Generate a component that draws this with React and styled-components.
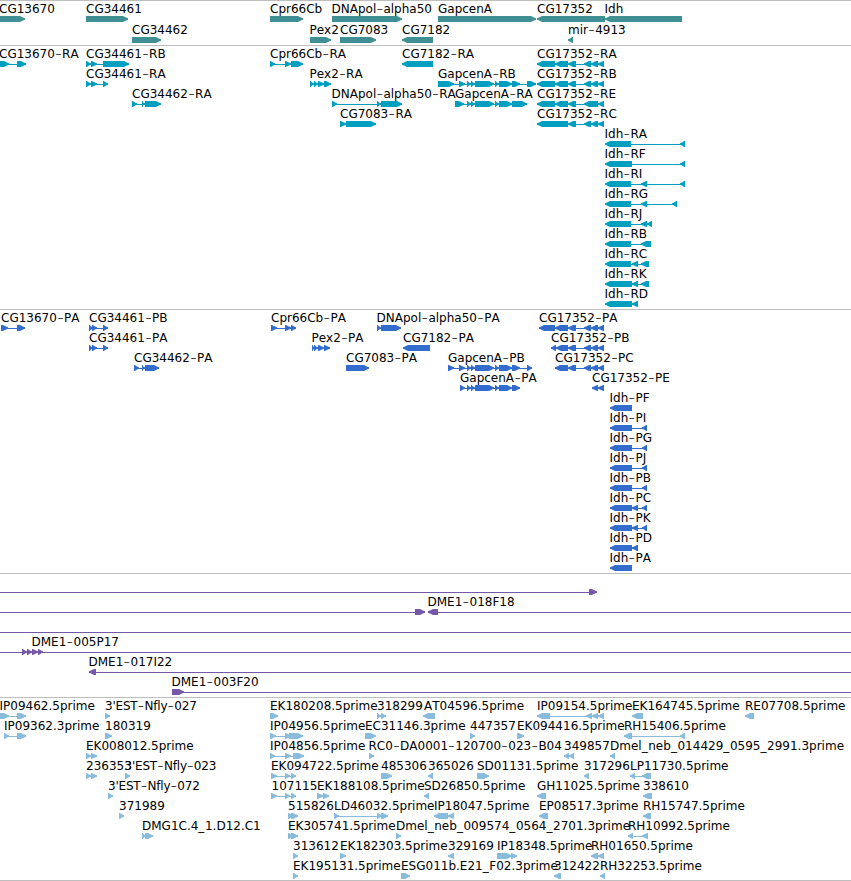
import React from 'react';
import styled, { createGlobalStyle } from 'styled-components';

const PageStyle = createGlobalStyle`
  body {
    margin: 0;
    background: #ffffff;
    overflow: hidden;
  }
`;

const Browser = styled.main`
  display: flex;
  flex-direction: column;
  width: 851px;
  height: 881px;
  border-bottom: 1px solid #bebebe;
  box-sizing: border-box;
  background: #ffffff;
`;

const Track = styled.section`
  display: flex;
  flex-direction: column;
  border-top: 1px solid #bebebe;
  padding-bottom: ${(p) => p.$gap}px;
  color: ${(p) => p.$color};
`;

const Lane = styled.svg`
  display: block;
  width: 851px;
  height: ${(p) => p.$height}px;
  overflow: visible;
`;

const Exon = styled.path`
  fill: currentColor;
`;

const Intron = styled.rect`
  fill: currentColor;
  height: 1px;
`;

const Label = styled.text`
  fill: #000000;
  font-family: 'DejaVu Sans', sans-serif;
  font-size: 12px;
  font-weight: 400;
  font-kerning: none;
  font-variant-ligatures: none;
  letter-spacing: ${(p) => (p.$tight ? '-0.2px' : 'normal')};
`;

const Dash = styled.tspan`
  font-size: 18px;
  font-weight: 200;
`;

const Underscore = styled.tspan`
  letter-spacing: 0.6px;
`;

// A feature: [label, strand, label x, exon ranges, optional line range]
const R = 1;
const L = -1;

const cg17352 = '568-576 584-591 591-598 598-604';
const gapMiddle = '467-471 471-475 475-494 495-499 499-512';

const tracks = [
  {
    color: '#408f95', rowHeight: 21, gap: 2,
    rows: [
      [
        ['CG13670', R, -1, '0-25'], ['CG34461', R, 86, '86-128'], ['Cpr66Cb', R, 270, '270-303'],
        ['DNApol-alpha50', R, 331.5, '332-402'], ['GapcenA', R, 438, '438-536'],
        ['CG17352', L, 537, '537-605'], ['Idh', L, 604.5, '605-682'],
      ],
      [
        ['CG34462', R, 132, '132-161'], ['Pex2', R, 309.5, '310-331'], ['CG7083', R, 340, '340-376'],
        ['CG7182', L, 402, '402-433'], ['mir-4913', L, 568, '568-573'],
      ],
    ],
  },
  {
    color: '#009fbf', rowHeight: 20, gap: 3,
    rows: [
      [
        ['CG13670-RA', R, -1, '0-9 17-26'], ['CG34461-RB', R, 86, '86-91 91-97 103-129'],
        ['Cpr66Cb-RA', R, 270, '270-275 285-291 291-303'], ['CG7182-RA', L, 402, '402-433'],
        ['CG17352-RA', L, 537, `537-555 555-568 ${cg17352}`],
      ],
      [
        ['CG34461-RA', R, 86, '86-91 91-97 103-108'], ['Pex2-RA', R, 309.5, '310-314 314-318 318-324 324-331'],
        ['GapcenA-RB', R, 438, `438-454 459-465 ${gapMiddle} 512-520 527-536`],
        ['CG17352-RB', L, 537, `537-555 555-568 ${cg17352}`],
      ],
      [
        ['CG34462-RA', R, 132, '132-137 142-145 145-161'], ['DNApol-alpha50-RA', R, 331.5, '332-337 377-381 381-402'],
        ['GapcenA-RA', R, 455, `455-464 ${gapMiddle} 512-527`],
        ['CG17352-RE', L, 537, '537-555 555-568 568-576 584-598 598-604'],
      ],
      [['CG7083-RA', R, 340, '340-346 346-376'], ['CG17352-RC', L, 537, `537-568 ${cg17352}`]],
      [['Idh-RA', L, 604.5, '605-631 680-685']],
      [['Idh-RF', L, 604.5, '605-632 680-685']],
      [['Idh-RI', L, 604.5, '605-631 641-647 680-685']],
      [['Idh-RG', L, 604.5, '605-631 641-647 672-677']],
      [['Idh-RJ', L, 604.5, '605-631 641-647 647-652']],
      [['Idh-RB', L, 604.5, '605-631 641-651']],
      [['Idh-RC', L, 604.5, '605-631 632-638 641-649']],
      [['Idh-RK', L, 604.5, '605-632 632-638 641-649']],
      [['Idh-RD', L, 604.5, '605-632 632-638']],
    ],
  },
  {
    color: '#326ccc', rowHeight: 20, gap: 3,
    rows: [
      [
        ['CG13670-PA', R, 1, '1-8 17-25'], ['CG34461-PB', R, 89, '89-93 92-97 103-108'],
        ['Cpr66Cb-PA', R, 271, '271-277 285-291 291-296'], ['DNApol-alpha50-PA', R, 376.5, '377-381 381-401'],
        ['CG17352-PA', L, 539, `539-555 555-568 ${cg17352}`],
      ],
      [
        ['CG34461-PA', R, 89, '89-93 92-97 103-108'], ['Pex2-PA', R, 311.5, '312-315 314-318 318-324 324-330'],
        ['CG7182-PA', L, 403, '403-430'], ['CG17352-PB', L, 551, `551-556 556-568 ${cg17352}`],
      ],
      [
        ['CG34462-PA', R, 134, '134-139 142-145 145-159'], ['CG7083-PA', R, 346, '346-369'],
        ['GapcenA-PB', R, 448, `448-454 459-465 ${gapMiddle} 512-520 527-532`],
        ['CG17352-PC', L, 555, `555-568 ${cg17352}`],
      ],
      [['GapcenA-PA', R, 460, `460-465 ${gapMiddle} 512-520`], ['CG17352-PE', L, 592, '592-598 598-604']],
      [['Idh-PF', L, 609.5, '610-632']],
      [['Idh-PI', L, 609.5, '610-632 642-647']],
      [['Idh-PG', L, 609.5, '610-632 642-647']],
      [['Idh-PJ', L, 609.5, '610-632 642-647']],
      [['Idh-PB', L, 609.5, '610-632 642-647']],
      [['Idh-PC', L, 609.5, '610-632 632-638 642-647']],
      [['Idh-PK', L, 609.5, '610-632 632-638 642-647']],
      [['Idh-PD', L, 609.5, '610-632 632-638']],
      [['Idh-PA', L, 609.5, '610-632']],
    ],
  },
  {
    color: '#7558a8', rowHeight: 20, gap: 3,
    rows: [
      [['', R, 0, '589-597', [0, 597]]],
      [['', R, 0, '415-425', [0, 425]], ['DME1-018F18', L, 427.5, '428-438', [428, 851]]],
      [['', R, 0, '', [0, 851]]],
      [['DME1-005P17', R, 31.5, '22-27 27-32 32-38 38-43', [0, 851]]],
      [['DME1-017I22', L, 88.5, '89-96', [89, 851]]],
      [['DME1-003F20', R, 171.5, '172-184', [172, 851]]],
    ],
  },
  {
    color: '#88bbdc', rowHeight: 20, gap: 2,
    rows: [
      [
        ['IP09462.5prime', R, -0.5, '0-9 17-26'], ["3'EST-Nfly-027", R, 105, '105-110'],
        ['EK180208.5prime', R, 270, '270-278'], ['318299', R, 377, '377-381 381-386'],
        ['AT04596.5prime', L, 424, '423-435'], ['IP09154.5prime', L, 537, '537-550 586-592 592-598 598-604'],
        ['EK164745.5prime', L, 632, '632-643'], ['RE07708.5prime', L, 745, '745-754'],
      ],
      [
        ['IP09362.3prime', R, 4, '4-9 17-26'], ['180319', R, 105, '105-112'],
        ['IP04956.5prime', R, 270, '270-276 285-291 289-303'], ['EC31146.3prime', R, 365, '365-376'],
        ['447357', R, 470, '470-475'], ['EK094416.5prime', R, 517, '517-524'],
        ['RH15406.5prime', L, 624, '624-632 680-685'],
      ],
      [
        ['EK008012.5prime', R, 86, '86-91 91-97'], ['IP04856.5prime', R, 270, '270-275 285-291 293-304'],
        ['RC0-DA0001-120700-023-B04', R, 368.5, '369-374'], ['349857', L, 564, '564-569 569-574'],
        ['Dmel_neb_014429_0595_2991.3prime', L, 610, '610-615'],
      ],
      [
        ['236353', R, 86, '86-91 91-97'], ["3'EST-Nfly-023", R, 124.5, '125-130'],
        ['EK094722.5prime', R, 271, '271-277 285-290 291-296'], ['485306', R, 381, '381-392'],
        ['365026', L, 428, '428-433'], ['SD01131.5prime', R, 477, '477-489'],
        ['317296', L, 584, '584-589'], ['LP11730.5prime', L, 630, '630-635 642-651'],
      ],
      [
        ["3'EST-Nfly-072", R, 108, '108-113'], ['107115', R, 271.5, '271-277 285-290 291-296'],
        ['EK188108.5prime', R, 317, '317-323 323-329'], ['SD26850.5prime', L, 424, '424-429'],
        ['GH11025.5prime', L, 537, '537-546'], ['338610', L, 643, '643-652'],
      ],
      [
        ['371989', R, 119, '119-124'], ['515826', R, 288, '288-293 291-298'],
        ['LD46032.5prime', R, 334, '334-339 377-382 381-388'], ['IP18047.5prime', L, 434, '434-448 448-454'],
        ['EP08517.3prime', L, 539, '539-548'], ['RH15747.5prime', L, 643, '643-651'],
      ],
      [
        ['DMG1C.4_1.D12.C1', R, 142, '142-146 145-153'], ['EK305741.5prime', R, 288, '288-293 291-298'],
        ['Dmel_neb_009574_0564_2701.3prime', R, 396, '396-401'], ['RH10992.5prime', L, 628, '628-633 642-648'],
      ],
      [
        ['313612', R, 293, '293-298'], ['EK182303.5prime', R, 340, '340-346'],
        ['329169', L, 448, '448-454'], ['IP18348.5prime', R, 497, '497-512 511-517'],
        ['RH01650.5prime', L, 591, '591-598 598-604'],
      ],
      [
        ['EK195131.5prime', R, 293, '293-298'], ['ESG011b.E21_F02.3prime', R, 401, '401-410'],
        ['312422', L, 554, '554-561'], ['RH32253.5prime', L, 600, '600-605'],
      ],
    ],
  },
];

// Short exons are stubby triangles, longer ones a bar with a rounded tip.
function exonPath([start, end], strand) {
  const width = end - start;
  const tail = strand === R ? start : end;
  const tip = strand === R ? end : start;
  const neck = width <= 6 ? tail + strand * 0.8 : tip - strand * 5;
  const bend = tip - strand * 2;
  return `M${tail} 15H${neck}L${bend} 16.4L${tip} 17.2V18.8L${bend} 19.6L${neck} 21H${tail}Z`;
}

function FeatureLabel({ x, text }) {
  return (
    <Label x={x} y="12" $tight={text.startsWith("3'")}>
      {text.split(/([-_])/).map((part, i, all) => {
        if (part === '-') return <Dash key={i} dx="0.3" dy="1.2">-</Dash>;
        if (part === '_') return <Underscore key={i}>_</Underscore>;
        if (all[i - 1] === '-') return <tspan key={i} dx="0.4" dy="-1.2">{part}</tspan>;
        return part;
      })}
    </Label>
  );
}

function Feature({ data }) {
  const [label, strand, labelX, ranges, line] = data;
  const exons = ranges ? ranges.split(' ').map((r) => r.split('-').map(Number)) : [];
  const [from, to] = line || [exons[0][0], exons[exons.length - 1][1]];
  return (
    <g>
      {(line || exons.length > 1) && <Intron x={from} y="18" width={to - from} />}
      {exons.map((exon, i) => <Exon key={i} d={exonPath(exon, strand)} />)}
      {label && <FeatureLabel x={labelX} text={label} />}
    </g>
  );
}

export default function App() {
  return (
    <>
      <PageStyle />
      <Browser>
        {tracks.map((track) => (
          <Track key={track.color} $color={track.color} $gap={track.gap}>
            {track.rows.map((features, i) => (
              <Lane key={i} $height={track.rowHeight}>
                {features.map((feature, j) => <Feature key={j} data={feature} />)}
              </Lane>
            ))}
          </Track>
        ))}
      </Browser>
    </>
  );
}
